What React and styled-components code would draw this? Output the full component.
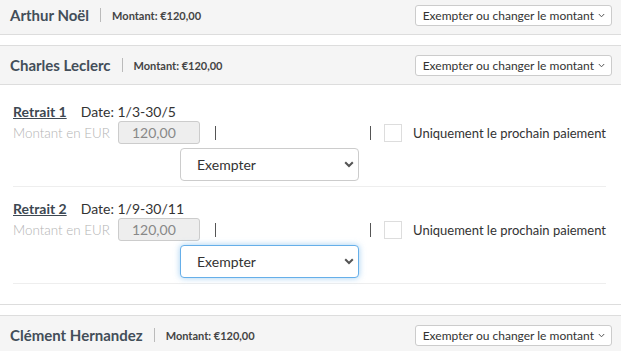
import React from 'react';
import styled, { createGlobalStyle } from 'styled-components';

const GlobalStyle = createGlobalStyle`
  html, body {
    margin: 0;
    padding: 0;
    background: #ffffff;
    font-family: Lato, "Noto Sans", sans-serif;
    color: #333333;
  }
`;

const Page = styled.div`
  width: 621px;
  height: 351px;
  overflow: hidden;
`;

const List = styled.div`
  margin-top: -5px;
`;

const Panel = styled.section`
  border-top: 1px solid #dddddd;
  border-bottom: 1px solid #dddddd;
  margin-bottom: 10px;
`;

const Header = styled.div`
  display: flex;
  align-items: center;
  height: 38px;
  padding: 0 12px 0 10px;
  background-color: #f5f5f5;
  border-bottom: ${props => props.$open ? '1px solid #dddddd' : 'none'};
`;

const Name = styled.span`
  font-size: 15px;
  font-weight: 700;
  color: #434e59;
`;

const HeaderSep = styled.span`
  width: 1px;
  height: 14px;
  background-color: #bbbbbb;
  margin: 0 11px 0 11px;
`;

const Amount = styled.span`
  font-size: 11px;
  font-weight: 700;
  color: #444444;
`;

const MenuButton = styled.button`
  margin-left: auto;
  margin-right: -3px;
  display: flex;
  align-items: center;
  gap: 4px;
  height: 21px;
  padding: 0 6px 0 7px;
  background: #ffffff;
  border: 1px solid #cccccc;
  border-radius: 3px;
  font-family: inherit;
  font-size: 12px;
  color: #333333;
`;

const Body = styled.div`
  padding: 5px 15px 20px 13px;
`;

const Block = styled.div`
  padding: 12px 0 5px;
  border-bottom: 1px solid #eeeeee;
`;

const TitleLine = styled.div`
  display: flex;
  align-items: center;
  height: 18px;
  font-size: 14px;
`;

const Title = styled.span`
  font-weight: 700;
  text-decoration: underline;
  color: #3d4852;
  margin-right: 14px;
`;

const AmountRow = styled.div`
  display: flex;
  align-items: center;
  height: 23px;
  margin-top: 1px;
`;

const FieldLabel = styled.span`
  width: 105px;
  font-size: 13.4px;
  font-weight: 300;
  color: #b3b3b3;
`;

const AmountInput = styled.div`
  box-sizing: border-box;
  width: 82px;
  height: 23px;
  padding-left: 13px;
  display: flex;
  align-items: center;
  background-color: #eeeeee;
  border: 1px solid #cccccc;
  border-radius: 3px;
  font-size: 14px;
  color: #888888;
`;

const Bar = styled.span`
  width: 1px;
  height: 14px;
  background-color: #555555;
  margin-left: ${props => props.$left || 0}px;
`;

const RightGroup = styled.div`
  margin-left: auto;
  display: flex;
  align-items: center;
`;

const Check = styled.span`
  box-sizing: border-box;
  width: 18px;
  height: 18px;
  border: 1px solid #dddddd;
  background: #ffffff;
  margin: 0 11px 0 13px;
`;

const CheckLabel = styled.span`
  font-size: 13px;
  color: #333333;
`;

const SelectRow = styled.div`
  padding-left: 167px;
  margin-top: 4px;
`;

const SelectWrap = styled.div`
  position: relative;
  width: 179px;
  height: 33px;
`;

const Select = styled.select`
  box-sizing: border-box;
  width: 100%;
  height: 100%;
  appearance: none;
  padding: 0 0 0 16px;
  background: #ffffff;
  border: 1px solid ${props => props.$focused ? '#66afe9' : '#cccccc'};
  border-radius: 4px;
  box-shadow: ${props => props.$focused ? '0 0 6px rgba(102, 175, 233, 0.6)' : 'none'};
  font-family: inherit;
  font-size: 14px;
  color: #333333;
  outline: none;
`;

const Chevron = styled.svg`
  position: absolute;
  right: 5px;
  top: 13px;
  pointer-events: none;
`;

const SmallChevron = () => (
  <svg width="7" height="5" viewBox="0 0 7 5">
    <path d="M0.8 1 L3.5 3.8 L6.2 1" fill="none" stroke="#555" strokeWidth="1" />
  </svg>
);

const people = [
  { name: 'Arthur Noël', open: false },
  { name: 'Charles Leclerc', open: true },
  { name: 'Clément Hernandez', open: false },
];

const withdrawals = [
  { label: 'Retrait 1', date: '1/3-30/5', focused: false },
  { label: 'Retrait 2', date: '1/9-30/11', focused: true },
];

const Withdrawal = ({ item }) => (
  <Block>
    <TitleLine>
      <Title>{item.label}</Title>
      <span>Date: {item.date}</span>
    </TitleLine>
    <AmountRow>
      <FieldLabel>Montant en EUR</FieldLabel>
      <AmountInput>120,00</AmountInput>
      <Bar $left={15} />
      <RightGroup>
        <Bar />
        <Check />
        <CheckLabel>Uniquement le prochain paiement</CheckLabel>
      </RightGroup>
    </AmountRow>
    <SelectRow>
      <SelectWrap>
        <Select $focused={item.focused} defaultValue="exempt">
          <option value="exempt">Exempter</option>
          <option value="change">Changer le montant</option>
        </Select>
        <Chevron width="10" height="7" viewBox="0 0 10 7">
          <path d="M1.2 1.2 L5 5 L8.8 1.2" fill="none" stroke="#555" strokeWidth="2" />
        </Chevron>
      </SelectWrap>
    </SelectRow>
  </Block>
);

const App = () => (
  <Page>
    <GlobalStyle />
    <List>
      {people.map(p => (
        <Panel key={p.name}>
          <Header $open={p.open}>
            <Name>{p.name}</Name>
            <HeaderSep />
            <Amount>Montant: €120,00</Amount>
            <MenuButton>
              Exempter ou changer le montant
              <SmallChevron />
            </MenuButton>
          </Header>
          {p.open && (
            <Body>
              {withdrawals.map(w => <Withdrawal key={w.label} item={w} />)}
            </Body>
          )}
        </Panel>
      ))}
    </List>
  </Page>
);

export default App;
